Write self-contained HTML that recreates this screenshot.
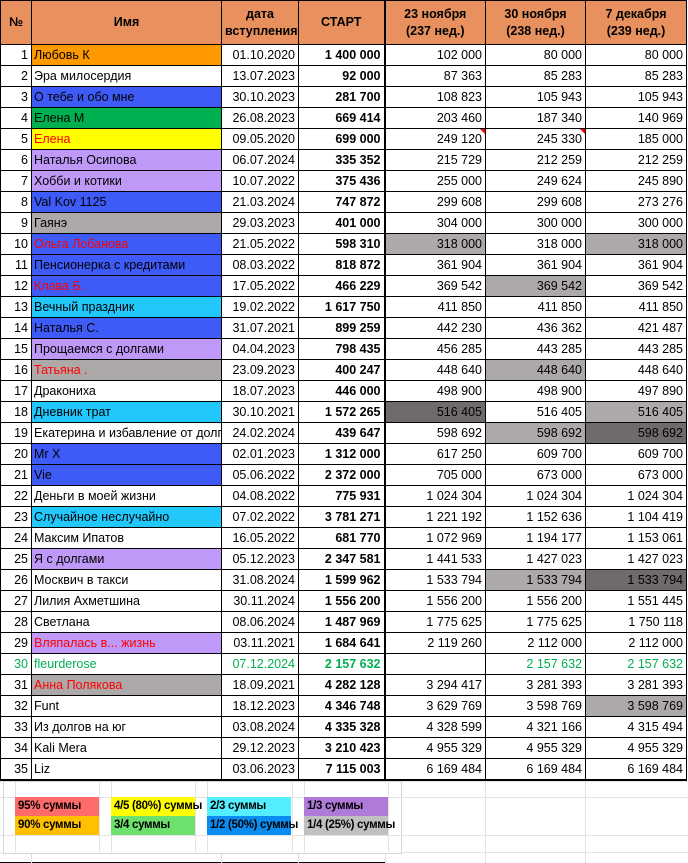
<!DOCTYPE html>
<html><head><meta charset="utf-8"><style>
body{margin:0;width:688px;height:863px;background:#fff;overflow:hidden;font-family:"Liberation Sans",sans-serif;font-size:12.5px;color:#000}
table{position:absolute;left:0;top:0;border-collapse:collapse;table-layout:fixed;width:687px}
td,th{border:1px solid #000;height:20px;padding:0 3px;white-space:nowrap;overflow:hidden;line-height:20px}
th{background:#E8915F;height:43px;font-weight:bold;line-height:17px;font-size:12.5px}
td{text-align:right}
td:nth-child(2){text-align:left;padding-left:2px}
td:nth-child(4){font-weight:bold}
td:nth-child(4),th:nth-child(4){border-right:2px solid #000}
tr:last-child td{border-bottom:2px solid #000}
.o{background:#FF9900}.b{background:#3F5BF7}.g{background:#00B050}.y{background:#FFFF00}.p{background:#BF99F7}.s{background:#ADA9A8}.c{background:#22C8FC}.d{background:#6F6B6A}
.r{color:#FF0000}.gr td{color:#00B050}
.t{position:relative}.t:after{content:"";position:absolute;right:0;top:0;border-top:5px solid #f00;border-left:5px solid transparent}
.l{position:absolute;width:84px;height:19px;line-height:19px;font-weight:bold;font-size:11.5px;letter-spacing:-0.3px;padding-left:3px;box-sizing:border-box;white-space:nowrap;overflow:visible}
.vl{position:absolute;width:1px;background:#e3e3e3}
.hl{position:absolute;height:1px;background:#e3e3e3}
</style></head><body>
<div class="hl" style="left:0;top:781px;width:688px"></div>
<div class="hl" style="left:0;top:797px;width:688px"></div>
<div class="hl" style="left:0;top:835px;width:688px"></div>
<div class="hl" style="left:0;top:852px;width:688px"></div>
<div class="hl" style="left:0;top:862px;width:385px;background:#000"></div>
<div class="vl" style="left:31px;top:779px;height:84px"></div>
<div class="vl" style="left:221px;top:779px;height:84px"></div>
<div class="vl" style="left:298px;top:779px;height:84px"></div>
<div class="vl" style="left:385px;top:779px;height:84px"></div>
<div class="vl" style="left:485px;top:779px;height:84px"></div>
<div class="vl" style="left:585px;top:779px;height:84px"></div>
<div style="position:absolute;left:3px;top:781px;width:397px;height:71px;border:1px solid #d5d5d5;background:#fff"></div>
<div class="vl" style="left:15px;top:782px;height:70px"></div>
<div class="vl" style="left:99px;top:782px;height:70px"></div>
<div class="vl" style="left:111px;top:782px;height:70px"></div>
<div class="vl" style="left:195px;top:782px;height:70px"></div>
<div class="vl" style="left:207px;top:782px;height:70px"></div>
<div class="vl" style="left:292px;top:782px;height:70px"></div>
<div class="vl" style="left:304px;top:782px;height:70px"></div>
<div class="vl" style="left:388px;top:782px;height:70px"></div>
<div class="hl" style="left:4px;top:797px;width:396px"></div>
<div class="hl" style="left:4px;top:835px;width:396px"></div>
<div class="l" style="left:15px;top:797px;background:#FF6B6B">95% суммы</div>
<div class="l" style="left:15px;top:816px;background:#FFC000">90% суммы</div>
<div class="l" style="left:111px;top:797px;background:#FFFF00">4/5 (80%) суммы</div>
<div class="l" style="left:111px;top:816px;background:#6EE06E">3/4 суммы</div>
<div class="l" style="left:207px;top:797px;background:#55EEFF">2/3 суммы</div>
<div class="l" style="left:207px;top:816px;background:#0A8CF0">1/2 (50%) суммы</div>
<div class="l" style="left:304px;top:797px;background:#B07AD8">1/3 суммы</div>
<div class="l" style="left:304px;top:816px;background:#C0C0C0">1/4 (25%) суммы</div>
<table>
<colgroup><col style="width:31px"><col style="width:190px"><col style="width:77px"><col style="width:86px"><col style="width:101px"><col style="width:100px"><col style="width:101px"></colgroup>
<tr><th>№</th><th>Имя</th><th>дата<br>вступления</th><th>СТАРТ</th><th>23 ноября<br>(237 нед.)</th><th>30 ноября<br>(238 нед.)</th><th>7 декабря<br>(239 нед.)</th></tr>
<tr><td>1</td><td class="o">Любовь К</td><td>01.10.2020</td><td>1 400 000</td><td>102 000</td><td>80 000</td><td>80 000</td></tr>
<tr><td>2</td><td>Эра милосердия</td><td>13.07.2023</td><td>92 000</td><td>87 363</td><td>85 283</td><td>85 283</td></tr>
<tr><td>3</td><td class="b">О тебе и обо мне</td><td>30.10.2023</td><td>281 700</td><td>108 823</td><td>105 943</td><td>105 943</td></tr>
<tr><td>4</td><td class="g">Елена М</td><td>26.08.2023</td><td>669 414</td><td>203 460</td><td>187 340</td><td>140 969</td></tr>
<tr><td>5</td><td class="y r">Елена</td><td>09.05.2020</td><td>699 000</td><td class="t">249 120</td><td class="t">245 330</td><td>185 000</td></tr>
<tr><td>6</td><td class="p">Наталья Осипова</td><td>06.07.2024</td><td>335 352</td><td>215 729</td><td>212 259</td><td>212 259</td></tr>
<tr><td>7</td><td class="p">Хобби и котики</td><td>10.07.2022</td><td>375 436</td><td>255 000</td><td>249 624</td><td>245 890</td></tr>
<tr><td>8</td><td class="b">Val Kov 1125</td><td>21.03.2024</td><td>747 872</td><td>299 608</td><td>299 608</td><td>273 276</td></tr>
<tr><td>9</td><td class="s">Гаянэ</td><td>29.03.2023</td><td>401 000</td><td>304 000</td><td>300 000</td><td>300 000</td></tr>
<tr><td>10</td><td class="b r">Ольга Лобанова</td><td>21.05.2022</td><td>598 310</td><td class="s">318 000</td><td>318 000</td><td class="s">318 000</td></tr>
<tr><td>11</td><td class="b">Пенсионерка с кредитами</td><td>08.03.2022</td><td>818 872</td><td>361 904</td><td>361 904</td><td>361 904</td></tr>
<tr><td>12</td><td class="b r">Клава Б.</td><td>17.05.2022</td><td>466 229</td><td>369 542</td><td class="s">369 542</td><td>369 542</td></tr>
<tr><td>13</td><td class="c">Вечный праздник</td><td>19.02.2022</td><td>1 617 750</td><td>411 850</td><td>411 850</td><td>411 850</td></tr>
<tr><td>14</td><td class="b">Наталья С.</td><td>31.07.2021</td><td>899 259</td><td>442 230</td><td>436 362</td><td>421 487</td></tr>
<tr><td>15</td><td class="p">Прощаемся с долгами</td><td>04.04.2023</td><td>798 435</td><td>456 285</td><td>443 285</td><td>443 285</td></tr>
<tr><td>16</td><td class="s r">Татьяна .</td><td>23.09.2023</td><td>400 247</td><td>448 640</td><td class="s">448 640</td><td>448 640</td></tr>
<tr><td>17</td><td>Дракониха</td><td>18.07.2023</td><td>446 000</td><td>498 900</td><td>498 900</td><td>497 890</td></tr>
<tr><td>18</td><td class="c">Дневник трат</td><td>30.10.2021</td><td>1 572 265</td><td class="d">516 405</td><td>516 405</td><td class="s">516 405</td></tr>
<tr><td>19</td><td>Екатерина и избавление от долгов</td><td>24.02.2024</td><td>439 647</td><td>598 692</td><td class="s">598 692</td><td class="d">598 692</td></tr>
<tr><td>20</td><td class="b">Mr X</td><td>02.01.2023</td><td>1 312 000</td><td>617 250</td><td>609 700</td><td>609 700</td></tr>
<tr><td>21</td><td class="b">Vie</td><td>05.06.2022</td><td>2 372 000</td><td>705 000</td><td>673 000</td><td>673 000</td></tr>
<tr><td>22</td><td>Деньги в моей жизни</td><td>04.08.2022</td><td>775 931</td><td>1 024 304</td><td>1 024 304</td><td>1 024 304</td></tr>
<tr><td>23</td><td class="c">Случайное неслучайно</td><td>07.02.2022</td><td>3 781 271</td><td>1 221 192</td><td>1 152 636</td><td>1 104 419</td></tr>
<tr><td>24</td><td>Максим Ипатов</td><td>16.05.2022</td><td>681 770</td><td>1 072 969</td><td>1 194 177</td><td>1 153 061</td></tr>
<tr><td>25</td><td class="p">Я с долгами</td><td>05.12.2023</td><td>2 347 581</td><td>1 441 533</td><td>1 427 023</td><td>1 427 023</td></tr>
<tr><td>26</td><td>Москвич в такси</td><td>31.08.2024</td><td>1 599 962</td><td>1 533 794</td><td class="s">1 533 794</td><td class="d">1 533 794</td></tr>
<tr><td>27</td><td>Лилия Ахметшина</td><td>30.11.2024</td><td>1 556 200</td><td>1 556 200</td><td>1 556 200</td><td>1 551 445</td></tr>
<tr><td>28</td><td>Светлана</td><td>08.06.2024</td><td>1 487 969</td><td>1 775 625</td><td>1 775 625</td><td>1 750 118</td></tr>
<tr><td>29</td><td class="p r">Вляпалась в... жизнь</td><td>03.11.2021</td><td>1 684 641</td><td>2 119 260</td><td>2 112 000</td><td>2 112 000</td></tr>
<tr class="gr"><td>30</td><td>fleurderose</td><td>07.12.2024</td><td>2 157 632</td><td></td><td>2 157 632</td><td>2 157 632</td></tr>
<tr><td>31</td><td class="s r">Анна Полякова</td><td>18.09.2021</td><td>4 282 128</td><td>3 294 417</td><td>3 281 393</td><td>3 281 393</td></tr>
<tr><td>32</td><td>Funt</td><td>18.12.2023</td><td>4 346 748</td><td>3 629 769</td><td>3 598 769</td><td class="s">3 598 769</td></tr>
<tr><td>33</td><td>Из долгов на юг</td><td>03.08.2024</td><td>4 335 328</td><td>4 328 599</td><td>4 321 166</td><td>4 315 494</td></tr>
<tr><td>34</td><td>Kali Mera</td><td>29.12.2023</td><td>3 210 423</td><td>4 955 329</td><td>4 955 329</td><td>4 955 329</td></tr>
<tr><td>35</td><td>Liz</td><td>03.06.2023</td><td>7 115 003</td><td>6 169 484</td><td>6 169 484</td><td>6 169 484</td></tr>
</table>
</body></html>
